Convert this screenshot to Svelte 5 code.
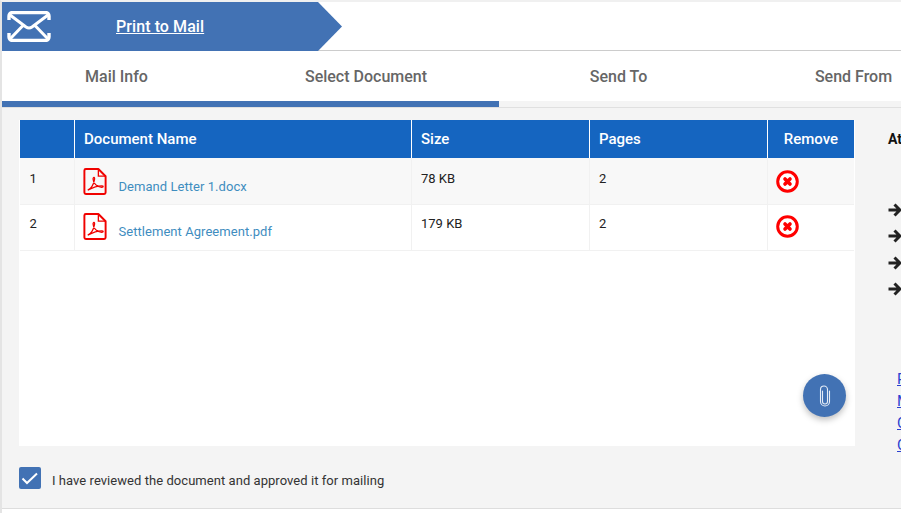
<script lang="ts">
  const tabs = [
    { label: 'Mail Info', width: 229 },
    { label: 'Select Document', width: 270 },
    { label: 'Send To', width: 235 },
    { label: 'Send From', width: 235 },
  ];
  const docs = [
    { name: 'Demand Letter 1.docx', size: '78 KB', pages: 2 },
    { name: 'Settlement Agreement.pdf', size: '179 KB', pages: 2 },
  ];
  const links = ['Print', 'Mail', 'Cost', 'Contact'];
  let approved = $state(true);
</script>

<div class="page">
  <header class="banner">
    <div class="flag">
      <svg class="mail" viewBox="0 0 44 31" width="44" height="31" fill="none" stroke="#fff" stroke-width="3.400">
        <path d="M2 9V5a3.500 3.500 0 0 1 3.500-3.500h33A3.500 3.500 0 0 1 42 5v4M2 22v4a3.500 3.500 0 0 0 3.500 3.500h33A3.500 3.500 0 0 0 42 26v-4" />
        <path stroke-width="3" d="M3 4 L19 16 Q22 18 25 16 L41 4 M3 28 L16 14.500 M41 28 L28 14.500" />
      </svg>
      <a href="#print">Print to Mail</a>
    </div>
  </header>

  <nav class="tabs">
    {#each tabs as tab}
      <div class="tab" style="width: {tab.width}px">{tab.label}</div>
    {/each}
  </nav>
  <div class="track"><div class="progress"></div></div>

  <main class="content">
    <section class="left">
      <div class="panel">
        <table>
          <colgroup>
            <col style="width: 54px" />
            <col style="width: 337px" />
            <col style="width: 178px" />
            <col style="width: 178px" />
            <col style="width: 87px" />
          </colgroup>
          <thead>
            <tr>
              <th></th>
              <th>Document Name</th>
              <th>Size</th>
              <th>Pages</th>
              <th class="center">Remove</th>
            </tr>
          </thead>
          <tbody>
            {#each docs as doc, i}
              <tr>
                <td>{i + 1}</td>
                <td>
                  <div class="doc">
                    <svg viewBox="0 0 24 28" width="24" height="27" fill="none" stroke="#f00200">
                      <path stroke-width="2" stroke-linejoin="round" d="M2.500 1h13l7.500 7.500v17a1.500 1.500 0 0 1-1.500 1.500h-19a1.500 1.500 0 0 1-1.500-1.500v-23a1.500 1.500 0 0 1 1.500-1.500z" />
                      <path stroke-width="1.400" d="M15.500 1v7.500h7.500" />
                      <path stroke-width="1.300" d="M4.500 23c3-1.500 6-6 7-11 .5-3-1.500-3-1.500-.5 0 4 4 8.500 9 8.500 2 0 2-1.500 0-1.500-5 0-9 1.500-14.500 4.500z" />
                    </svg>
                    <a href="#doc">{doc.name}</a>
                  </div>
                </td>
                <td>{doc.size}</td>
                <td>{doc.pages}</td>
                <td>
                  <svg class="remove" viewBox="0 0 23 23" width="23" height="23">
                    <circle cx="11.500" cy="11.500" r="9.800" fill="#fff" stroke="#f00" stroke-width="3" />
                    <path d="M9 9 L14 14 M14 9 L9 14" stroke="#f00" stroke-width="3.600" stroke-linecap="round" />
                  </svg>
                </td>
              </tr>
            {/each}
          </tbody>
        </table>
        <button class="fab" aria-label="Attach">
          <svg viewBox="0 0 14 24" width="14" height="24" fill="none" stroke="#e6edf7" stroke-width="1.100" stroke-linecap="round">
            <path d="M4.500 7v10.500a2.500 2.500 0 0 0 5 0V5.500a3.500 3.500 0 0 0-7 0v12a4.500 4.500 0 0 0 9 0V7" />
          </svg>
        </button>
      </div>

      <label class="approve">
        <input type="checkbox" bind:checked={approved} />
        <span class="box">
          <svg viewBox="0 0 22 22" width="22" height="22" fill="none" stroke="#fff" stroke-width="2">
            <path d="M3.500 11.500l4.500 4.500 10-9.500" />
          </svg>
        </span>
        <span class="approve-text">I have reviewed the document and approved it for mailing</span>
      </label>
    </section>

    <aside class="side">
      <h4>Attachments</h4>
      <ul class="steps">
        {#each [0, 1, 2, 3] as step (step)}
          <li>
            <svg viewBox="0 0 14 14" width="14" height="14" fill="none" stroke="#222" stroke-width="3">
              <path d="M0.500 7h11M6.500 1.500l5.500 5.500-5.500 5.500" />
            </svg>
          </li>
        {/each}
      </ul>
      <ul class="links">
        {#each links as link}
          <li><a href="#link">{link}</a></li>
        {/each}
      </ul>
    </aside>
  </main>
</div>

<style>
  :global(body) {
    background: #fff;
  }
  .page {
    width: 901px;
    height: 513px;
    overflow: hidden;
    font-family: Roboto, "Liberation Sans", sans-serif;
    font-size: 13px;
    color: #222;
    background: #fff;
    box-sizing: border-box;
    border-top: 2px solid #f0f0f0;
    border-left: 2px solid #e4e4e4;
  }
  .banner {
    height: 48px;
    border-bottom: 1px solid #ccc;
    box-sizing: content-box;
  }
  .flag {
    width: 340px;
    height: 49px;
    display: flex;
    align-items: center;
    background: #4272b4;
    clip-path: polygon(0 0, 316px 0, 340px 50%, 316px 100%, 0 100%);
  }
  .mail {
    margin-left: 5px;
    flex: none;
  }
  .flag a {
    margin-left: 65px;
    color: #fff;
    font-size: 16px;
    font-weight: 500;
    letter-spacing: 0.08px;
  }
  .tabs {
    display: flex;
    width: 970px;
    height: 50px;
    align-items: center;
  }
  .tab {
    flex: none;
    text-align: center;
    font-size: 16px;
    font-weight: 500;
    color: #666;
  }
  .track {
    height: 6px;
    background: #f4f4f4;
    border-bottom: 1px solid #e0e0e0;
    box-sizing: content-box;
  }
  .progress {
    width: 497px;
    height: 6px;
    background: #4272b4;
  }
  .content {
    height: 401px;
    display: flex;
    background: #f4f4f4;
    border-bottom: 1px solid #ddd;
    padding: 12px 0 0 17px;
    box-sizing: border-box;
    width: 1100px;
  }
  .left {
    width: 836px;
    flex: none;
  }
  .panel {
    position: relative;
    height: 326px;
    background: #fff;
    padding-left: 1px;
    box-sizing: border-box;
  }
  table {
    table-layout: fixed;
    width: 834px;
    border-collapse: collapse;
    font-size: 13px;
  }
  th {
    height: 38px;
    padding: 0 9px 0 9.500px;
    background: #1565c0;
    color: #fff;
    font-size: 15px;
    font-weight: 500;
    text-align: left;
    border-left: 1px solid #fff;
  }
  th:first-child,
  td:first-child {
    border-left: 0;
  }
  th.center {
    text-align: center;
  }
  td {
    padding: 9px 9px 0 9.500px;
    vertical-align: top;
    color: #222;
    border-left: 1px solid #f1f1f1;
    border-bottom: 1px solid #f1f1f1;
    line-height: 24px;
    height: 46px;
    box-sizing: border-box;
  }
  tbody tr:first-child {
    background: #f8f8f8;
  }
  tbody tr:nth-child(2) td {
    padding-top: 7px;
  }
  .doc {
    display: flex;
    gap: 12px;
    height: 29px;
    margin: 1px 0 0 -1.500px;
  }
  .doc svg {
    flex: none;
  }
  .doc a {
    color: #3f8dbf;
    text-decoration: none;
    line-height: 24px;
    margin-top: 7px;
    letter-spacing: 0.05px;
  }
  .remove {
    display: block;
    margin: 3px 0 0 -1.500px;
  }
  .fab {
    position: absolute;
    left: 784px;
    top: 254px;
    width: 43px;
    height: 43px;
    border: 0;
    border-radius: 50%;
    padding: 0;
    display: flex;
    align-items: center;
    justify-content: center;
    background: #4272b4;
    box-shadow: 0 3px 6px rgba(0, 0, 0, 0.25);
  }
  .approve {
    display: flex;
    gap: 11px;
    margin-top: 21px;
    font-size: 13px;
    color: #333;
    letter-spacing: 0.05px;
  }
  .approve input {
    display: none;
  }
  .approve-text {
    line-height: 22px;
    padding-top: 3px;
  }
  .box {
    width: 22px;
    height: 22px;
    border-radius: 2px;
    background: #4272b4;
    flex: none;
  }
  .box svg {
    display: block;
  }
  .side {
    margin-left: 33px;
    width: 200px;
  }
  .side h4 {
    margin: 11px 0 0;
    font-size: 14px;
    font-weight: 700;
    color: #111;
  }
  ul {
    list-style: none;
    margin: 0;
    padding: 0;
  }
  .steps {
    margin-top: 50px;
  }
  .steps li {
    height: 26.300px;
    display: flex;
    align-items: center;
  }
  .links {
    margin: 66px 0 0 9px;
  }
  .links li {
    height: 22px;
    line-height: 22px;
    font-size: 15px;
  }
  .links a {
    color: #2a3fd0;
  }
</style>
